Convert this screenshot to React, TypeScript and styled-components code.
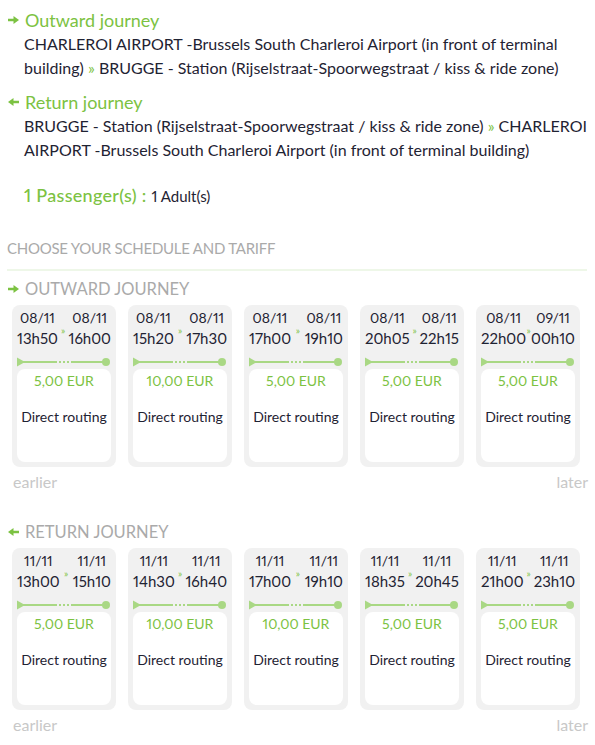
import React from 'react'
import styled, { createGlobalStyle } from 'styled-components'

const GREEN = '#7cc242'
const LINE_GREEN = '#a9d884'
const TEXT = '#1f2333'
const GREY = '#aaaaaa'

const GlobalStyle = createGlobalStyle`
    * { box-sizing: border-box; }
    body {
        margin: 0;
        background: #ffffff;
        font-family: Lato, "Open Sans", Arial, sans-serif;
        font-variant-numeric: proportional-nums;
        color: ${TEXT};
    }
`

interface ITrip {
    fromDate: string
    fromTime: string
    toDate: string
    toTime: string
    price: string
}

const outward: ITrip[] = [
    { fromDate: '08/11', fromTime: '13h50', toDate: '08/11', toTime: '16h00', price: '5,00 EUR' },
    { fromDate: '08/11', fromTime: '15h20', toDate: '08/11', toTime: '17h30', price: '10,00 EUR' },
    { fromDate: '08/11', fromTime: '17h00', toDate: '08/11', toTime: '19h10', price: '5,00 EUR' },
    { fromDate: '08/11', fromTime: '20h05', toDate: '08/11', toTime: '22h15', price: '5,00 EUR' },
    { fromDate: '08/11', fromTime: '22h00', toDate: '09/11', toTime: '00h10', price: '5,00 EUR' },
]

const returns: ITrip[] = [
    { fromDate: '11/11', fromTime: '13h00', toDate: '11/11', toTime: '15h10', price: '5,00 EUR' },
    { fromDate: '11/11', fromTime: '14h30', toDate: '11/11', toTime: '16h40', price: '10,00 EUR' },
    { fromDate: '11/11', fromTime: '17h00', toDate: '11/11', toTime: '19h10', price: '10,00 EUR' },
    { fromDate: '11/11', fromTime: '18h35', toDate: '11/11', toTime: '20h45', price: '5,00 EUR' },
    { fromDate: '11/11', fromTime: '21h00', toDate: '11/11', toTime: '23h10', price: '5,00 EUR' },
]

const Arrow = ({ back }: { back?: boolean }) => (
    <ArrowSvg width="11" height="8" viewBox="0 0 11 8" $back={back}>
        <path d="M0 2.8h5.5V0L11 4 5.5 8V5.2H0z" fill={GREEN} />
    </ArrowSvg>
)

const Timeline = () => (
    <TimelineSvg width="94" height="10" viewBox="0 0 94 10">
        <path d="M0 0.5L8 5 0 9.5z" fill={LINE_GREEN} />
        <rect x="6" y="4" width="34" height="2" fill={LINE_GREEN} />
        <rect x="42" y="4" width="2" height="2" fill={LINE_GREEN} />
        <rect x="46" y="4" width="2" height="2" fill={LINE_GREEN} />
        <rect x="50" y="4" width="2" height="2" fill={LINE_GREEN} />
        <rect x="54" y="4" width="35" height="2" fill={LINE_GREEN} />
        <circle cx="89" cy="5" r="4" fill={LINE_GREEN} />
    </TimelineSvg>
)

const TripCard = ({ trip }: { trip: ITrip }) => (
    <Card>
        <Times>
            <TimeCol>
                <DateText>{trip.fromDate}</DateText>
                <HourText>{trip.fromTime}</HourText>
            </TimeCol>
            <Chevron>»</Chevron>
            <TimeCol>
                <DateText>{trip.toDate}</DateText>
                <HourText>{trip.toTime}</HourText>
            </TimeCol>
        </Times>
        <Timeline />
        <Tariff>
            <Price>{trip.price}</Price>
            <Routing>Direct routing</Routing>
        </Tariff>
    </Card>
)

const Schedule = ({ title, trips, back }: { title: string, trips: ITrip[], back?: boolean }) => (
    <ScheduleBlock $back={back}>
        <SubTitle><Arrow back={back} />{title}</SubTitle>
        <CardRow>
            {trips.map((t, i) => <TripCard key={i} trip={t} />)}
        </CardRow>
        <Pager>
            <span>earlier</span>
            <span>later</span>
        </Pager>
    </ScheduleBlock>
)

const App = () => {
    return (
        <Page>
            <GlobalStyle />
            <Journey>
                <JourneyTitle><Arrow />Outward journey</JourneyTitle>
                <Route>
                    CHARLEROI AIRPORT -Brussels South Charleroi Airport (in front of terminal building) <Sep>»</Sep> BRUGGE - Station (Rijselstraat-Spoorwegstraat / kiss &amp; ride zone)
                </Route>
            </Journey>
            <Journey>
                <JourneyTitle><Arrow back />Return journey</JourneyTitle>
                <Route>
                    BRUGGE - Station (Rijselstraat-Spoorwegstraat / kiss &amp; ride zone) <Sep>»</Sep> CHARLEROI AIRPORT -Brussels South Charleroi Airport (in front of terminal building)
                </Route>
            </Journey>
            <Passengers>
                <strong>1 Passenger(s) : </strong>1 Adult(s)
            </Passengers>
            <SectionTitle>CHOOSE YOUR SCHEDULE AND TARIFF</SectionTitle>
            <Schedule title="OUTWARD JOURNEY" trips={outward} />
            <Schedule title="RETURN JOURNEY" trips={returns} back />
        </Page>
    )
}

export default App

const Page = styled.div`
    width: 595px;
    padding: 9px 2px 0 6px;
`

const Journey = styled.div`
    margin-bottom: 11px;
`

const JourneyTitle = styled.div`
    display: flex;
    align-items: center;
    gap: 6px;
    padding-left: 2px;
    font-size: 18px;
    line-height: 22px;
    color: ${GREEN};
`

const ArrowSvg = styled.svg<{ $back?: boolean }>`
    flex-shrink: 0;
    transform: ${p => p.$back ? 'scaleX(-1)' : 'none'};
`

const Route = styled.p`
    margin: 1px 0 0 18px;
    font-size: 16px;
    line-height: 24px;
    color: ${TEXT};
`

const Sep = styled.span`
    color: ${GREEN};
`

const Passengers = styled.p`
    margin: 21px 0 0 18px;
    font-size: 15px;
    line-height: 24px;
    color: ${TEXT};

    strong {
        font-weight: 500;
        font-size: 18px;
        letter-spacing: 0.3px;
        color: ${GREEN};
    }
`

const SectionTitle = styled.h2`
    margin: 29px 0 0 1px;
    padding-bottom: 10px;
    border-bottom: 2px solid #eef7e8;
    width: 580px;
    font-size: 15px;
    letter-spacing: -0.25px;
    font-weight: 400;
    line-height: 22px;
    color: ${GREY};
`

const ScheduleBlock = styled.div<{ $back?: boolean }>`
    margin-top: ${p => p.$back ? '30px' : '7px'};
`

const SubTitle = styled.div`
    display: flex;
    align-items: center;
    gap: 6px;
    padding-left: 2px;
    font-size: 16.5px;
    line-height: 22px;
    color: ${GREY};
`

const CardRow = styled.div`
    display: flex;
    gap: 12px;
    margin: 5px 0 0 6px;
`

const Card = styled.div`
    width: 104px;
    height: 162px;
    padding: 3px 5px 5px 5px;
    border-radius: 8px;
    background: #f1f1f1;
    display: flex;
    flex-direction: column;
    align-items: center;
`

const Times = styled.div`
    width: 100%;
    display: flex;
    justify-content: space-between;
    align-items: flex-start;
`

const TimeCol = styled.div`
    display: flex;
    flex-direction: column;
    align-items: center;
    color: ${TEXT};
`

const DateText = styled.span`
    font-size: 14px;
    line-height: 20px;
`

const HourText = styled.span`
    font-size: 15px;
    line-height: 20px;
`

const Chevron = styled.span`
    font-size: 10px;
    line-height: 10px;
    color: ${GREEN};
    margin-top: 17px;
`

const TimelineSvg = styled.svg`
    margin-top: 9px;
`

const Tariff = styled.div`
    margin-top: 2px;
    width: 100%;
    flex: 1;
    background: #ffffff;
    border-radius: 8px;
    display: flex;
    flex-direction: column;
    align-items: center;
`

const Price = styled.div`
    margin-top: 3px;
    font-size: 14px;
    line-height: 18px;
    color: ${GREEN};
`

const Routing = styled.div`
    margin-top: 18px;
    font-size: 14px;
    line-height: 18px;
    color: ${TEXT};
`

const Pager = styled.div`
    display: flex;
    justify-content: space-between;
    width: 582px;
    padding-left: 7px;
    margin-top: 6px;
    font-size: 16px;
    line-height: 18px;
    color: #c8c8c8;
`
